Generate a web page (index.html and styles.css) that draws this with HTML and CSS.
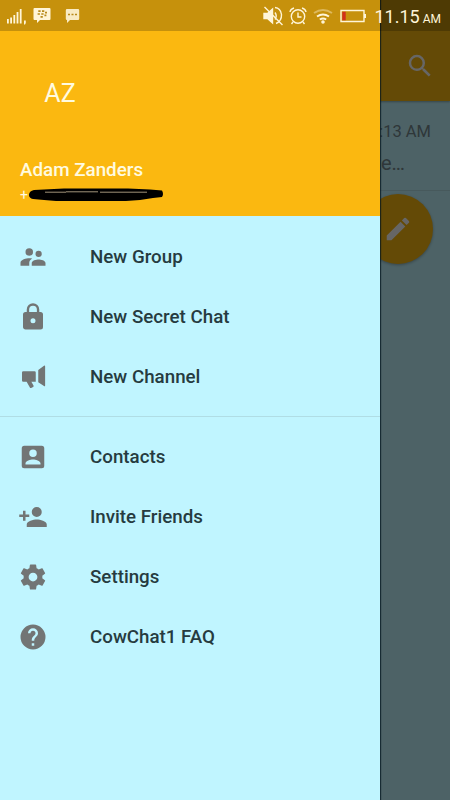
FILE: index.html
```html
<!DOCTYPE html>
<html lang="en">
<head>
    <meta charset="UTF-8">
    <meta name="viewport" content="width=device-width, initial-scale=1.0">
    <title>CowChat1</title>
    <link rel="stylesheet" href="styles.css">
</head>
<body>
    <div class="screen">
        <!-- chat list behind the drawer -->
        <main class="chats">
            <header class="toolbar">
                <svg class="icon" viewBox="0 0 24 24"><path d="M15.5 14h-.79l-.28-.27A6.47 6.47 0 0 0 16 9.5 6.5 6.5 0 1 0 9.5 16c1.61 0 3.09-.59 4.23-1.57l.27.28v.79l5 4.99L20.49 19l-4.99-5zm-6 0C7.01 14 5 11.99 5 9.5S7.01 5 9.5 5 14 7.01 14 9.5 11.99 14 9.5 14z"/></svg>
            </header>
            <div class="chat-row">
                <span class="chat-time">11:13 AM</span>
                <span class="chat-text">e…</span>
            </div>
            <button class="fab" aria-label="New message">
                <svg class="icon" viewBox="0 0 24 24"><path d="M3 17.25V21h3.75L17.81 9.94l-3.75-3.75L3 17.25zM20.71 7.04a1 1 0 0 0 0-1.41l-2.34-2.34a1 1 0 0 0-1.41 0l-1.83 1.83 3.75 3.75 1.83-1.83z"/></svg>
            </button>
        </main>
        <div class="scrim"></div>

        <!-- drawer -->
        <aside class="drawer">
            <div class="profile">
                <div class="avatar">AZ</div>
                <div class="name">Adam Zanders</div>
                <div class="phone">
                    <span>+</span>
                    <svg class="marker" viewBox="0 0 136 14" width="136" height="14">
                        <path d="M1 7Q1 3 6 2L16 1.500 36 .5H100L122 1.500 134 2.500Q136 6 134 9L125 10 112 12 98 13H28L16 12 5 11Q1 10 1 7z"/>
                        <path class="streak" d="M17 4.200H38M38 3.800H70M72 4.200H119"/>
                    </svg>
                </div>
            </div>
            <nav class="menu">
                <a class="item"><svg class="icon" viewBox="0 0 24 24"><path d="M16.5 12a2.5 2.5 0 1 0 0-5 2.5 2.5 0 0 0 0 5zM9 11a3 3 0 1 0 0-6 3 3 0 0 0 0 6zm7.500 3c-1.830 0-5.500.920-5.500 2.750V19h11v-2.250C22 14.920 18.330 14 16.500 14zM9 13c-2.330 0-7 1.170-7 3.500V19h7v-2.250c0-.850.330-2.340 2.370-3.470C10.500 13.100 9.660 13 9 13z"/></svg><span>New Group</span></a>
                <a class="item"><svg class="icon" viewBox="0 0 24 24"><path d="M18 8h-1V6A5 5 0 0 0 7 6v2H6a2 2 0 0 0-2 2v10c0 1.100.900 2 2 2h12a2 2 0 0 0 2-2V10a2 2 0 0 0-2-2zm-6 9a2 2 0 1 1 0-4 2 2 0 0 1 0 4zm3.100-9H8.900V6a3.100 3.100 0 0 1 6.200 0v2z"/></svg><span>New Secret Chat</span></a>
                <a class="item"><svg class="icon" viewBox="0 0 24 24"><path d="M4.200 7.300h9q1 0 1 1v7.500h-3.500l1.700 3q.4.700-.3 1.100l-1.600.8q-.7.300-1-.3L6.900 15.800H4.200q-1 0-1-1V8.300q0-1 1-1zM16.200 6.300l4.600-3.300q.9-.6.900.5v15.200q0 1.100-.9.5l-4.600-3z"/></svg><span>New Channel</span></a>
                <div class="divider"></div>
                <a class="item"><svg class="icon" viewBox="0 0 24 24"><path d="M3 5v14a2 2 0 0 0 2 2h14a2 2 0 0 0 2-2V5a2 2 0 0 0-2-2H5a2 2 0 0 0-2 2zm12 4a3 3 0 1 1-6 0 3 3 0 0 1 6 0zm-9 8c0-2 4-3.100 6-3.100s6 1.100 6 3.100v1H6v-1z"/></svg><span>Contacts</span></a>
                <a class="item"><svg class="icon" viewBox="0 0 24 24"><path d="M15 12a4 4 0 1 0 0-8 4 4 0 0 0 0 8zm-9-2V7H4v3H1v2h3v3h2v-3h3v-2H6zm9 4c-2.670 0-8 1.340-8 4v2h16v-2c0-2.660-5.330-4-8-4z"/></svg><span>Invite Friends</span></a>
                <a class="item"><svg class="icon" viewBox="0 0 24 24"><path d="M19.430 12.980c.04-.32.07-.64.07-.98s-.03-.66-.07-.98l2.110-1.650c.19-.15.24-.42.12-.64l-2-3.460c-.12-.22-.39-.3-.61-.22l-2.490 1c-.52-.4-1.080-.73-1.690-.98l-.38-2.650A.49.49 0 0 0 14 2h-4c-.25 0-.46.18-.49.42l-.38 2.650c-.61.250-1.170.590-1.690.980l-2.490-1c-.23-.09-.49 0-.61.220l-2 3.460c-.13.220-.07.490.12.640l2.110 1.650c-.04.320-.07.650-.07.980s.03.660.07.980l-2.110 1.650c-.19.150-.24.420-.12.640l2 3.460c.12.220.39.300.61.220l2.490-1c.52.400 1.080.730 1.690.980l.38 2.650c.03.240.24.420.49.420h4c.25 0 .46-.18.490-.42l.38-2.650c.61-.25 1.170-.59 1.690-.98l2.490 1c.23.090.49 0 .61-.22l2-3.460c.12-.22.07-.49-.12-.64l-2.110-1.650zM12 15.500a3.500 3.500 0 1 1 0-7 3.500 3.500 0 0 1 0 7z"/></svg><span>Settings</span></a>
                <a class="item"><svg class="icon" viewBox="0 0 24 24"><path d="M12 2a10 10 0 1 0 0 20 10 10 0 0 0 0-20zm1 17h-2v-2h2v2zm2.070-7.750-.9.920C13.450 12.900 13 13.500 13 15h-2v-.5c0-1.100.450-2.100 1.170-2.830l1.240-1.260c.37-.36.590-.86.590-1.410a2 2 0 0 0-4 0H8a4 4 0 0 1 8 0c0 .880-.36 1.680-.93 2.250z"/></svg><span>CowChat1 FAQ</span></a>
            </nav>
        </aside>

        <!-- system status bar -->
        <div class="status-bar">
            <div class="status-left">
                <svg width="20" height="18" viewBox="0 0 20 18"><path d="M0 12h1.800v4.500H0zM3.200 10.500H5v6H3.200zM6.400 8h1.800v8.500H6.400zM9.600 5h1.800v11.500H9.600zM12.800 2h1.800v14.500h-1.800zM17 13.500h1.800V16l-.8 1.500h-1z"/></svg>
                <svg class="bbm" width="18" height="17" viewBox="0 0 18 17"><path d="M1.500 1h15q1 0 1 1v10q0 1-1 1H7l-3 3v-3H1.500q-1 0-1-1V2q0-1 1-1z"/><path class="cut" d="M5.300 4.200h2.300M9 4.200h2.300M4.600 7h2.300M8.300 7h2.300M7.500 9.800h2.300M12 5.600h2M11.400 8.400h2"/></svg>
                <svg class="sms" width="15" height="16" viewBox="0 0 15 16"><path d="M2 1h11q1.200 0 1.200 1.200v8.600q0 1.200-1.200 1.200H5l-3 3v-3q-1.200 0-1.200-1.200V2.200Q.8 1 2 1z"/><path class="cut" d="M3 6.500h2M6.500 6.500h2M10 6.500h2"/></svg>
            </div>
            <div class="status-right">
                <svg class="line mute" width="21" height="20" viewBox="0 0 21 20"><path class="solid" d="M1 7.500h3.500l5-4.500v14l-5-4.500H1z"/><path d="M12 6.500q2.500 3.500 0 7M12 1.500q5.500.5 6.500 7 .3 6.500-5.500 9M1.500 1l18 18"/></svg>
                <svg class="line alarm" width="18" height="18" viewBox="0 0 18 18"><circle cx="9" cy="9.500" r="6.700"/><path d="M9 5.500V10h3.500M1 5q.5-3 4-4M17 5q-.5-3-4-4M4 15l-1.500 2M14 15l1.500 2"/></svg>
                <svg class="line wifi" width="20" height="16" viewBox="0 0 20 16"><path class="faint" d="M1 5Q10-1 19 5"/><path d="M4 8.500q6-4 12 0M6.800 11.500q3.200-2 6.400 0"/><circle class="solid" cx="10" cy="14" r=".8"/></svg>
                <svg class="line battery" width="27" height="14" viewBox="0 0 27 14"><path d="M1 1.500h23v11H1zM25.300 5v4"/><path class="low" d="M3 3.500h2v7H3z"/></svg>
                <span class="clock">11.15 <small>AM</small></span>
            </div>
        </div>
    </div>
</body>
</html>
```
FILE: styles.css
```css
* {
    margin: 0;
    padding: 0;
    box-sizing: border-box;
}

body {
    font-family: Roboto, "Noto Sans", sans-serif;
    background-color: #c0f5ff;
}

.screen {
    position: relative;
    width: 450px;
    height: 800px;
    overflow: hidden;
}

.icon {
    width: 30px;
    height: 30px;
    fill: currentColor;
    flex-shrink: 0;
}

/* chat list */
.chats {
    height: 100%;
    background-color: #c0f5ff;
}

.toolbar {
    height: 101px;
    padding: 31px 15px 0 0;
    display: flex;
    align-items: center;
    justify-content: flex-end;
    background-color: #fbb810;
    color: #fff;
    box-shadow: 0 1px 2px rgba(0, 0, 0, 0.3);
}

.chat-row {
    height: 90px;
    padding: 21px 19px 0 0;
    display: flex;
    flex-direction: column;
    align-items: flex-end;
    border-bottom: 1px solid #b2dfe6;
}

.chat-time {
    font-size: 16.5px;
    line-height: 20px;
    color: #758a8f;
}

.chat-text {
    margin: 9px 26px 0 0;
    font-size: 20px;
    line-height: 24px;
    color: #758a8f;
}

.fab {
    position: absolute;
    left: 363px;
    top: 194px;
    width: 70px;
    height: 70px;
    display: flex;
    align-items: center;
    justify-content: center;
    border: none;
    border-radius: 50%;
    background-color: #fbb810;
    color: #fff;
    box-shadow: 0 1px 3px rgba(0, 0, 0, 0.3);
}

.scrim {
    position: absolute;
    inset: 0;
    background-color: rgba(0, 0, 0, 0.6);
}

/* drawer */
.drawer {
    position: absolute;
    left: 0;
    top: 0;
    width: 380px;
    height: 100%;
    background-color: #c0f5ff;
    box-shadow: 1px 0 1px rgba(0, 20, 30, 0.7);
}

.profile {
    height: 216px;
    padding: 78px 20px 0;
    background-color: #fbb810;
    color: #fffbe0;
}

.avatar {
    width: 80px;
    font-size: 25px;
    line-height: 32px;
    text-align: center;
}

.name {
    margin-top: 49px;
    font-size: 18.8px;
    font-weight: 500;
    line-height: 22px;
}

.phone {
    margin-top: 7px;
    height: 14px;
    display: flex;
    align-items: center;
    font-size: 14px;
    line-height: 14px;
}

.marker {
    fill: #000;
}

.marker .streak {
    fill: none;
    stroke: #c9b998;
    stroke-width: 0.8;
}

.menu {
    padding-top: 11px;
}

.item {
    height: 60px;
    padding-left: 17.5px;
    display: flex;
    align-items: center;
    gap: 42.5px;
    color: #263b40;
    font-size: 18.75px;
    font-weight: 500;
}

.item .icon {
    color: #727575;
}

.divider {
    height: 1px;
    margin: 9px 0 10px;
    background-color: #b0dde5;
}

/* status bar */
.status-bar {
    position: absolute;
    left: 0;
    top: 0;
    width: 100%;
    height: 31px;
    padding: 0 9px 0 7px;
    display: flex;
    justify-content: space-between;
    background-color: rgba(0, 0, 0, 0.21);
    color: #fff5d8;
}

.status-left,
.status-right {
    display: flex;
    align-items: center;
}

.status-left svg {
    fill: currentColor;
}

.status-left .bbm {
    margin-left: 6px;
}

.status-left .sms {
    margin-left: 14px;
    opacity: 0.9;
}

.status-left .cut {
    stroke: #b78a1c;
    stroke-width: 1.7;
}

.line {
    fill: none;
    stroke: currentColor;
    stroke-width: 1.4;
}

.mute {
    margin-right: 5px;
}

.alarm {
    margin-right: 6px;
}

.wifi {
    margin-right: 7px;
    stroke-width: 2;
}

.battery {
    margin-right: 8px;
}

.solid {
    fill: currentColor;
}

.faint {
    opacity: 0.4;
}

.low {
    fill: #d2311b;
    stroke: #d2311b;
}

.clock {
    padding-top: 2px;
    font-size: 18px;
    word-spacing: -1.5px;
    white-space: nowrap;
}

.clock small {
    font-size: 12px;
}
```
